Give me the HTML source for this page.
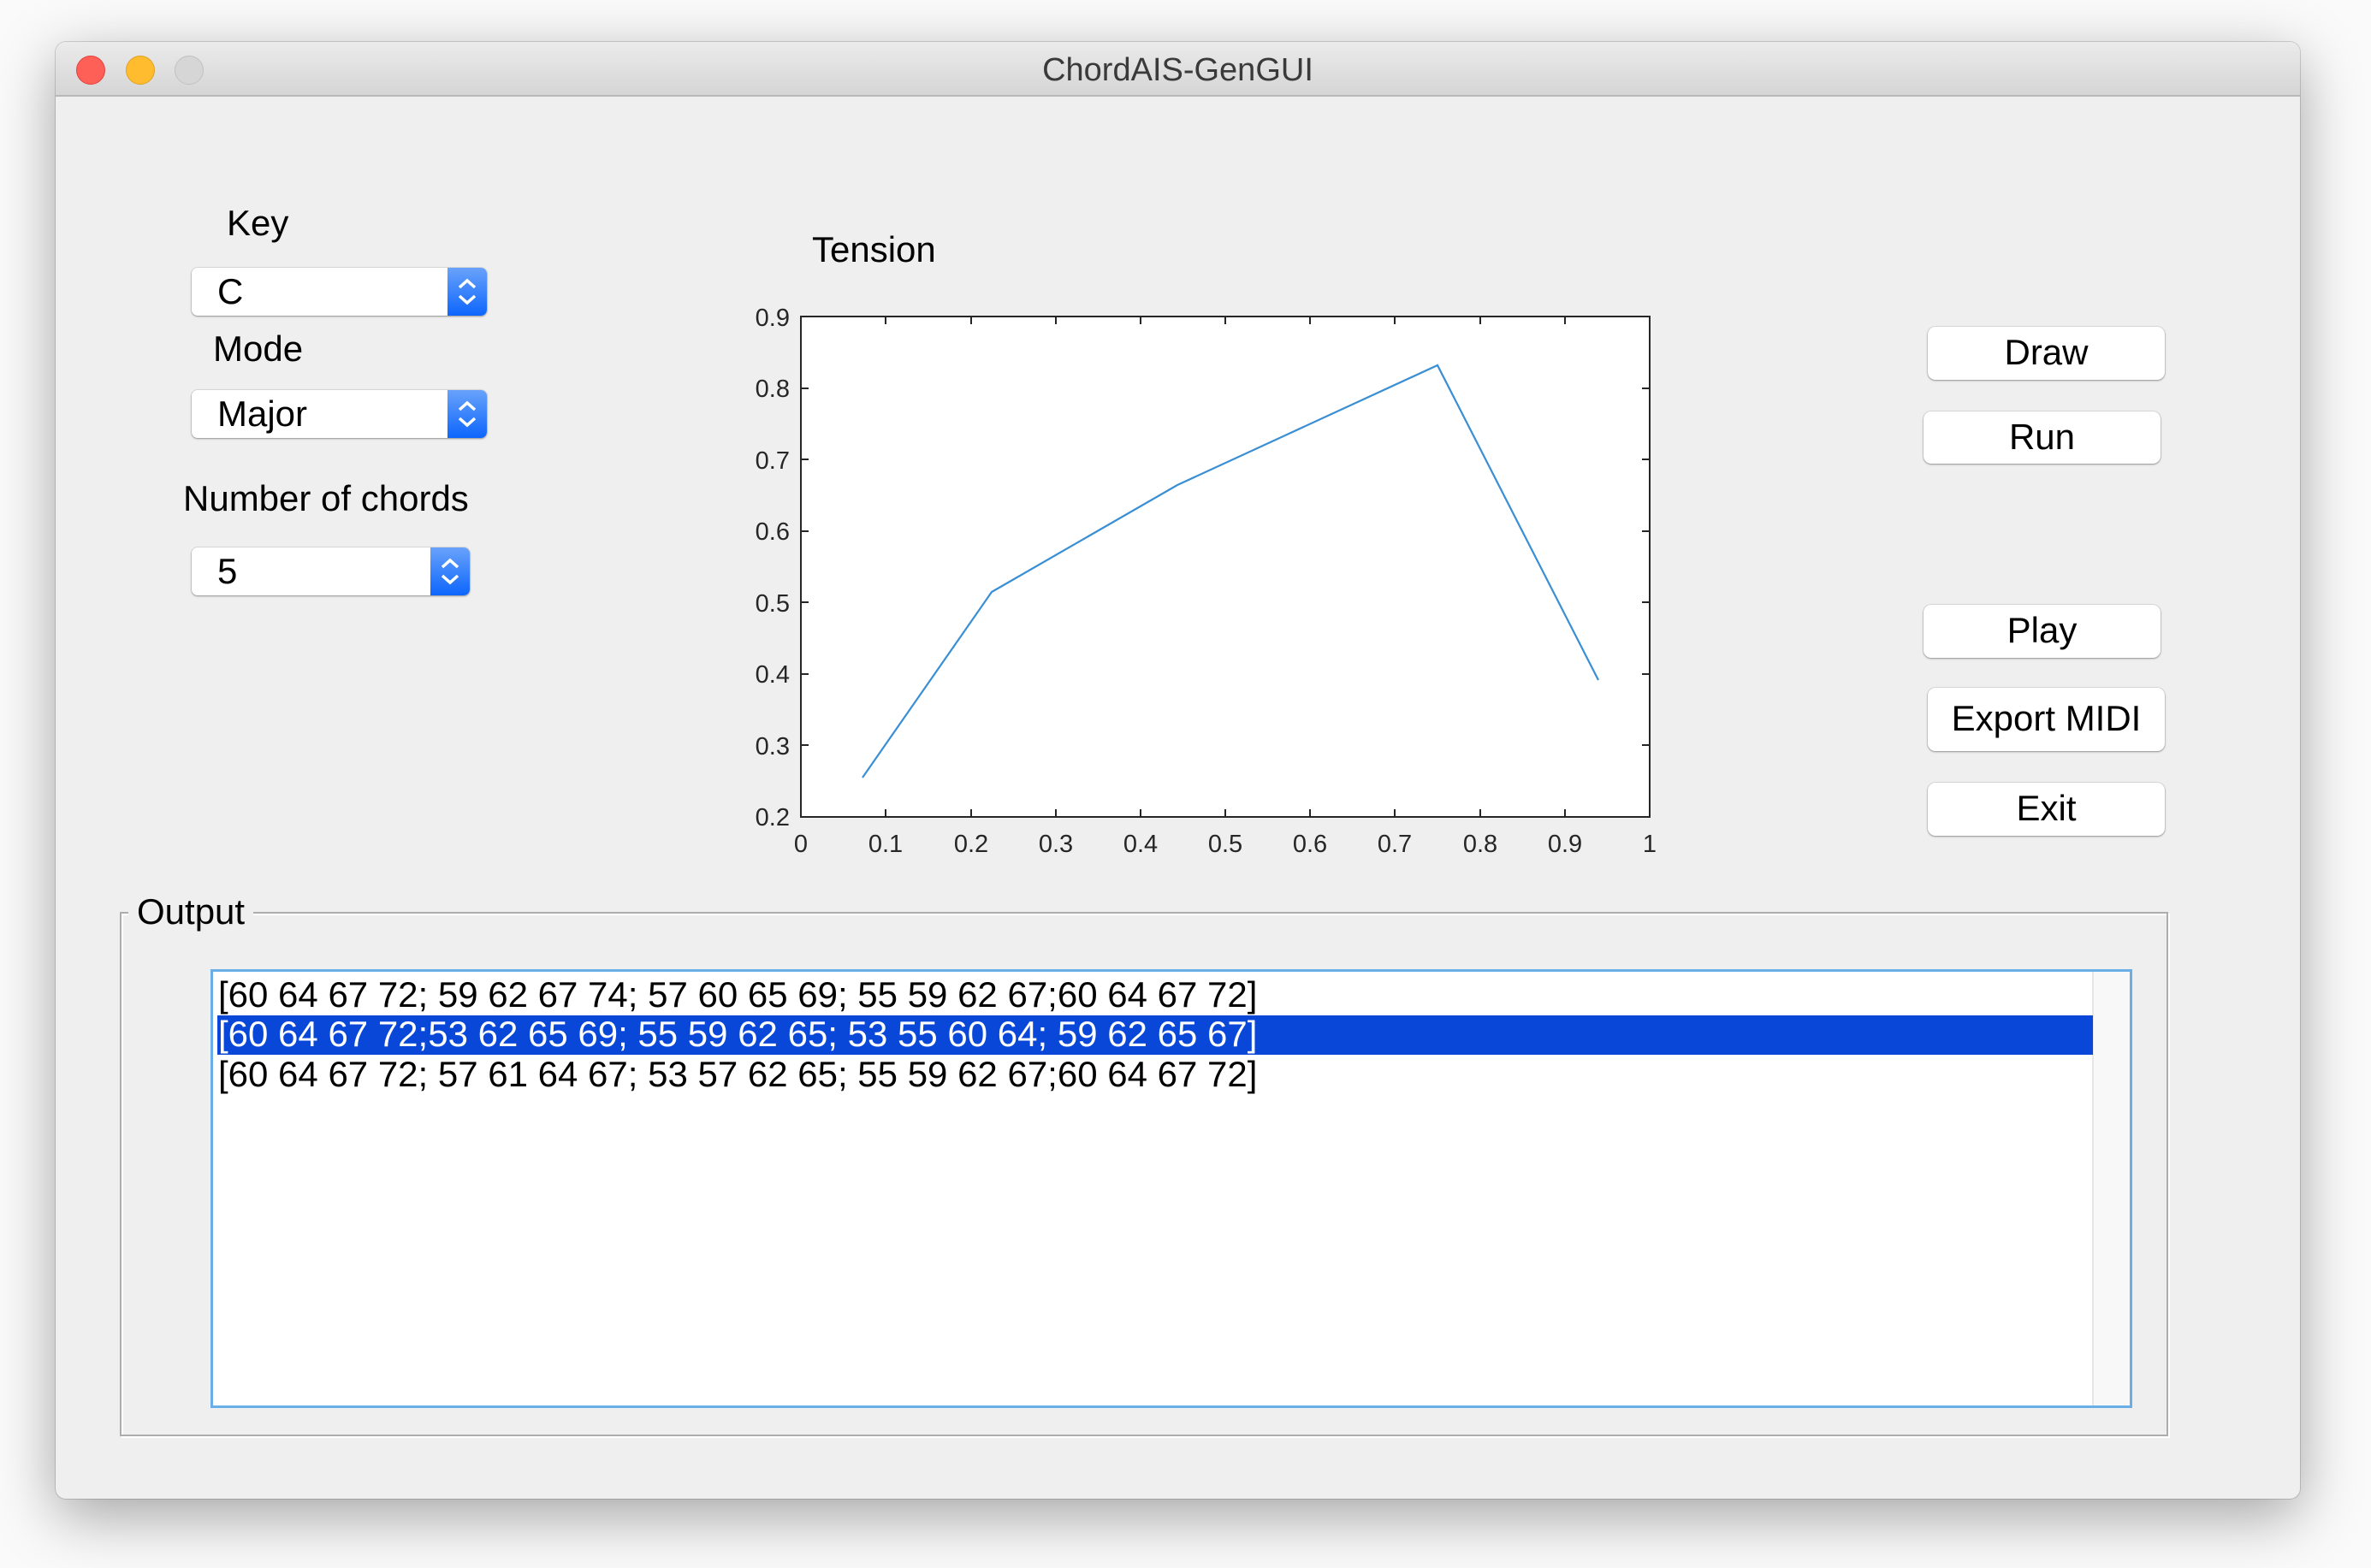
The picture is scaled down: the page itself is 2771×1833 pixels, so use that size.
<!DOCTYPE html>
<html><head><meta charset="utf-8"><style>
*{margin:0;padding:0;box-sizing:border-box}
body{width:2771px;height:1833px;background:#fafafa;position:relative;overflow:hidden;font-family:"Liberation Sans",sans-serif;color:#000}
.win{position:absolute;left:65px;top:49px;width:2623px;height:1703px;background:#efefef;border-radius:12px;box-shadow:0 20px 70px rgba(0,0,0,0.35),0 0 0 1px rgba(0,0,0,0.15);overflow:hidden}
.tb{position:absolute;left:0;top:0;width:100%;height:64px;background:linear-gradient(#ebebeb,#d5d5d5);border-bottom:2px solid #b8b8b8}
.tl{position:absolute;top:16px;width:34px;height:34px;border-radius:50%}
.title{position:absolute;left:0;right:0;top:12px;text-align:center;font-size:38px;color:#3a3a3a}
.a{position:absolute;white-space:nowrap}
.lbl{font-size:42px}
.dd{position:absolute;height:56px;background:#fff;border-radius:7px;box-shadow:0 1px 2px rgba(0,0,0,0.35),0 0 0 1px rgba(0,0,0,0.08);overflow:hidden;font-size:42px}
.dd span{position:absolute;left:30px;top:4px}
.dd .bl{position:absolute;right:0;top:0;width:46px;height:100%;background:linear-gradient(#69a2fb,#0d66fc)}
.btn{position:absolute;background:#fff;border-radius:9px;box-shadow:0 1px 2px rgba(0,0,0,0.35),0 0 0 1px rgba(0,0,0,0.08);font-size:42px;text-align:center}
</style></head><body>
<div class="win">
 <div class="tb">
  <div class="tl" style="left:24px;background:#fe5f57;border:1px solid #e0443e"></div>
  <div class="tl" style="left:82px;background:#febc2e;border:1px solid #dea123"></div>
  <div class="tl" style="left:139px;background:#d6d6d6;border:1px solid #c0c0c0"></div>
  <div class="title">ChordAIS-GenGUI</div>
 </div>
</div>
<div class="a lbl" style="left:265px;top:237px">Key</div>
<div class="dd" style="left:224px;top:313px;width:345px"><span>C</span><div class="bl"><svg width="46" height="56"><path d="M14 23 L23 15 L32 23 M14 33 L23 41 L32 33" stroke="#fff" stroke-width="3.5" fill="none"/></svg></div></div>
<div class="a lbl" style="left:249px;top:384px">Mode</div>
<div class="dd" style="left:224px;top:456px;width:345px"><span>Major</span><div class="bl"><svg width="46" height="56"><path d="M14 23 L23 15 L32 23 M14 33 L23 41 L32 33" stroke="#fff" stroke-width="3.5" fill="none"/></svg></div></div>
<div class="a lbl" style="left:214px;top:559px">Number of chords</div>
<div class="dd" style="left:224px;top:640px;width:325px"><span>5</span><div class="bl"><svg width="46" height="56"><path d="M14 23 L23 15 L32 23 M14 33 L23 41 L32 33" stroke="#fff" stroke-width="3.5" fill="none"/></svg></div></div>
<div class="a lbl" style="left:949px;top:268px">Tension</div>

<svg class="a" style="left:0;top:0" width="2771" height="1833">
 <rect x="936" y="370" width="992" height="585" fill="#fff" stroke="#262626" stroke-width="2"/>
 <g stroke="#262626" stroke-width="2">
  <path d="M1035 955v-9M1135 955v-9M1234 955v-9M1333 955v-9M1432 955v-9M1531 955v-9M1630 955v-9M1730 955v-9M1829 955v-9
  M1035 370v9M1135 370v9M1234 370v9M1333 370v9M1432 370v9M1531 370v9M1630 370v9M1730 370v9M1829 370v9
  M936 871h9M936 788h9M936 704h9M936 621h9M936 537h9M936 454h9 M1928 871h-9M1928 788h-9M1928 704h-9M1928 621h-9M1928 537h-9M1928 454h-9"/>
 </g>
 <polyline points="1008,909 1159,692 1376,567 1680,427 1868,795" fill="none" stroke="#3a8fd4" stroke-width="2.2"/>
 <g font-family="Liberation Sans" font-size="29" fill="#262626" text-anchor="end">
  <text x="923" y="381">0.9</text><text x="923" y="464">0.8</text><text x="923" y="548">0.7</text><text x="923" y="631">0.6</text><text x="923" y="715">0.5</text><text x="923" y="798">0.4</text><text x="923" y="882">0.3</text><text x="923" y="965">0.2</text>
 </g>
 <g font-family="Liberation Sans" font-size="29" fill="#262626" text-anchor="middle">
  <text x="936" y="996">0</text><text x="1035" y="996">0.1</text><text x="1135" y="996">0.2</text><text x="1234" y="996">0.3</text><text x="1333" y="996">0.4</text><text x="1432" y="996">0.5</text><text x="1531" y="996">0.6</text><text x="1630" y="996">0.7</text><text x="1730" y="996">0.8</text><text x="1829" y="996">0.9</text><text x="1928" y="996">1</text>
 </g>
 <rect x="141" y="1067" width="2392" height="611" fill="none" stroke="#fff" stroke-width="2" transform="translate(2,2)"/>
 <rect x="141" y="1067" width="2392" height="611" fill="none" stroke="#adadad" stroke-width="2"/>
</svg>

<div class="btn" style="left:2253px;top:382px;width:277px;height:62px;line-height:60px">Draw</div>
<div class="btn" style="left:2248px;top:481px;width:277px;height:61px;line-height:59px">Run</div>
<div class="btn" style="left:2248px;top:707px;width:277px;height:62px;line-height:60px">Play</div>
<div class="btn" style="left:2253px;top:804px;width:277px;height:74px;line-height:72px">Export MIDI</div>
<div class="btn" style="left:2253px;top:915px;width:277px;height:62px;line-height:60px">Exit</div>

<div class="a lbl" style="left:150px;top:1042px;background:#efefef;padding:0 10px">Output</div>
<div class="a" style="left:246px;top:1133px;width:2246px;height:513px;background:#fff;border:3px solid #6aaee8">
 <div class="a" style="right:0;top:0;width:44px;height:100%;background:#f8f8f8;border-left:2px solid #e6e6e6"></div>
 <div class="a" style="left:6px;top:3px;font-size:42px;line-height:47px">[60 64 67 72; 59 62 67 74; 57 60 65 69; 55 59 62 67;60 64 67 72]</div>
 <div class="a" style="left:5px;top:51px;width:2192px;height:46px;background:#0847d8"></div>
 <div class="a" style="left:6px;top:49px;font-size:42px;line-height:47px;color:#fff">[60 64 67 72;53 62 65 69; 55 59 62 65; 53 55 60 64; 59 62 65 67]</div>
 <div class="a" style="left:6px;top:96px;font-size:42px;line-height:47px">[60 64 67 72; 57 61 64 67; 53 57 62 65; 55 59 62 67;60 64 67 72]</div>
</div>
</body></html>
